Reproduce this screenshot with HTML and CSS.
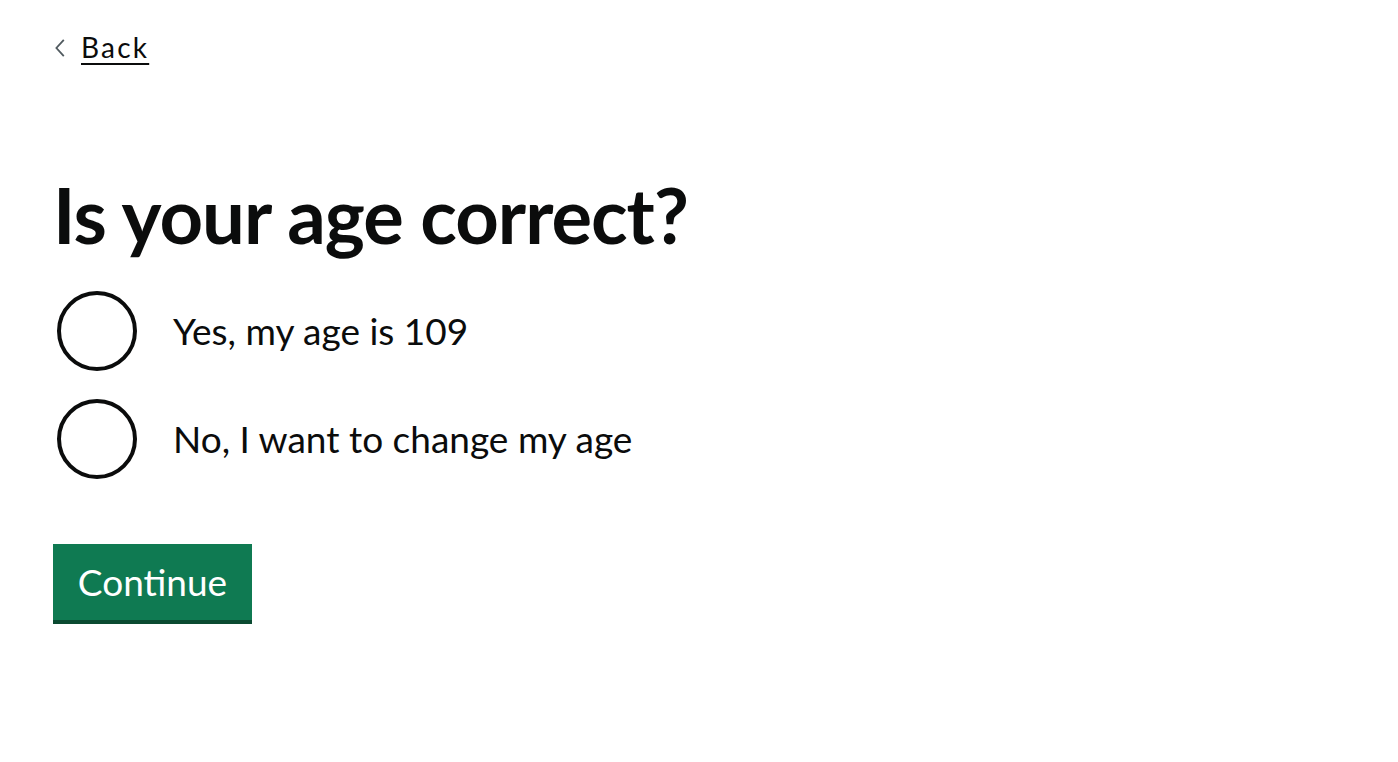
FILE: index.html
```html
<!DOCTYPE html>
<html lang="en">
<head>
<meta charset="utf-8">
<title>Is your age correct?</title>
<link rel="stylesheet" href="styles.css">
</head>
<body>
<div class="page">
  <a class="back-link" href="#">
    <svg class="back-chevron" width="10" height="18" viewBox="0 0 10 18" aria-hidden="true">
      <path d="M8.8 0.8 L1.4 9 L8.8 17.2" fill="none" stroke="#505a5f" stroke-width="1.8"/>
    </svg>
    <span class="back-text">Back</span>
  </a>
  <main class="main">
    <h1 class="heading">Is your age correct?</h1>
    <div class="radios">
      <label class="radio">
        <span class="radio-circle"></span>
        <span class="radio-label">Yes, my age is 109</span>
      </label>
      <label class="radio">
        <span class="radio-circle"></span>
        <span class="radio-label">No, I want to change my age</span>
      </label>
    </div>
    <button class="button" type="button">Continue</button>
  </main>
</div>
</body>
</html>
```

FILE: styles.css
```css
html, body {
  margin: 0;
  padding: 0;
  background: #ffffff;
}
body {
  font-family: Lato, "Liberation Sans", Arial, sans-serif;
  color: #0b0c0c;
}
.page {
  padding: 31px 0 0 53px;
}
.back-link {
  display: inline-flex;
  align-items: center;
  gap: 16px;
  text-decoration: none;
  color: #0b0c0c;
  padding-left: 2px;
}
.back-chevron {
  display: block;
  margin-top: 1px;
}
.back-text {
  font-size: 28px;
  line-height: 32px;
  letter-spacing: 2.2px;
  text-decoration: underline;
  text-decoration-thickness: 2px;
  text-underline-offset: 5px;
}
.main {
  padding-top: 112px;
}
.heading {
  margin: 0;
  font-family: Lato, "Liberation Sans", Arial, sans-serif;
  font-weight: 700;
  font-size: 76px;
  line-height: 80px;
  letter-spacing: -1px;
}
.radios {
  display: flex;
  flex-direction: column;
  gap: 28px;
  margin-top: 36px;
}
.radio {
  display: flex;
  align-items: center;
  gap: 36px;
}
.radio-circle {
  box-sizing: border-box;
  width: 80px;
  height: 80px;
  border: 4px solid #0b0c0c;
  border-radius: 50%;
  margin-left: 4px;
  flex: none;
}
.radio-label {
  font-size: 37px;
  line-height: 44px;
}
.button {
  display: block;
  box-sizing: border-box;
  margin-top: 65px;
  width: 199px;
  height: 80px;
  border: 0;
  border-bottom: 4px solid #0a4a31;
  padding: 0;
  background: #0f7a52;
  color: #ffffff;
  font-family: Lato, "Liberation Sans", Arial, sans-serif;
  font-size: 37px;
  line-height: 44px;
  cursor: pointer;
}
```
